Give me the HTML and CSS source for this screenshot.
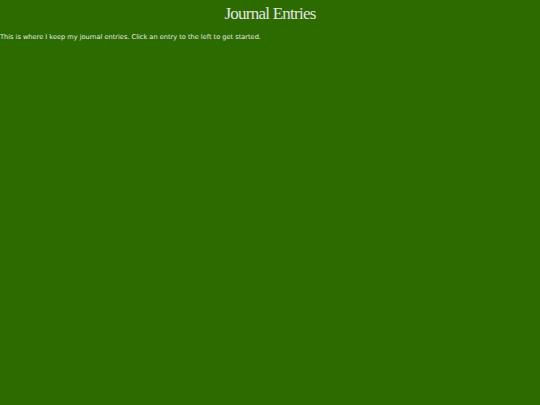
FILE: index.html
```html
<!DOCTYPE html>
<html>
<head>
<meta charset="utf-8">
<link rel="stylesheet" href="styles.css">
</head>
<body>
<main class="page">
  <h1 class="title">Journal Entries</h1>
  <p class="intro">This is where I keep my journal entries. Click an entry to the left to get started.</p>
</main>
</body>
</html>
```

FILE: styles.css
```css
html, body {
  margin: 0;
  padding: 0;
  height: 100%;
  background: #2b6b00;
}
.page {
  color: #ececec;
}
.title {
  margin: 0;
  padding-top: 4px;
  text-align: center;
  font-family: "Liberation Serif", serif;
  font-weight: normal;
  font-size: 17px;
  line-height: 20px;
  letter-spacing: -0.75px;
  color: #e4e4e4;
}
.intro {
  margin: 9px 0 0 0;
  font-family: "DejaVu Sans", sans-serif;
  font-size: 6.6px;
  line-height: 9px;
  color: #ececec;
}
```
